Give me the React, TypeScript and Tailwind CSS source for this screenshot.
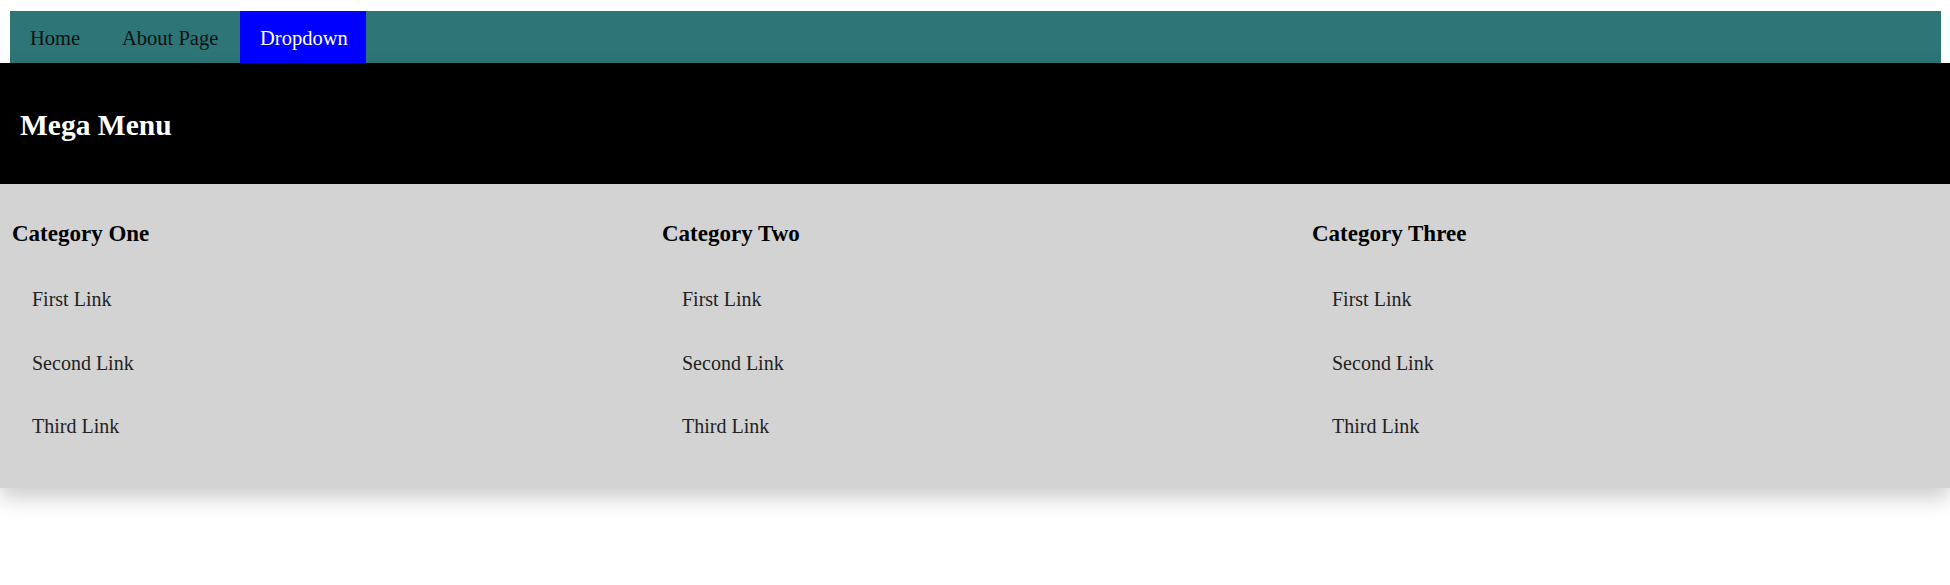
import React from 'react';

const categories = [
  { title: 'Category One', links: ['First Link', 'Second Link', 'Third Link'] },
  { title: 'Category Two', links: ['First Link', 'Second Link', 'Third Link'] },
  { title: 'Category Three', links: ['First Link', 'Second Link', 'Third Link'] },
];

const navItems = [
  { label: 'Home', active: false, width: 'w-[92px]' },
  { label: 'About Page', active: false, width: 'w-[138px]' },
  { label: 'Dropdown', active: true, width: 'w-[126px]' },
];

export default function App() {
  return (
    <div className="w-full h-[585px] bg-white font-['Liberation_Serif',serif] overflow-hidden">
      <div className="pt-[11px]">
        {/* top bar */}
        <nav className="ml-[10px] mr-[9px] h-[52px] bg-[#2d7577] flex">
          {navItems.map((item) => (
            <a
              key={item.label}
              href="#"
              className={`flex items-center ${item.width} pl-[20px] pt-[3px] text-[20.5px] leading-[23px] whitespace-nowrap ${
                item.active ? 'bg-[#0000ff] text-white' : 'text-[#111]'
              }`}
            >
              {item.label}
            </a>
          ))}
        </nav>

        {/* mega menu panel */}
        <div className="w-full shadow-[0_10px_20px_rgba(0,0,0,0.2)]">
          <div className="h-[121px] bg-black flex items-center px-[20px] pt-[2px]">
            <h2 className="text-white font-bold text-[29.5px] leading-[34px]">Mega Menu</h2>
          </div>
          <div className="h-[304px] bg-[#d3d3d3] grid grid-cols-3">
            {categories.map((cat) => (
              <div key={cat.title} className="pt-[37px] px-[12px]">
                <h3 className="font-bold text-[23px] leading-[26px] text-black mb-[21px]">{cat.title}</h3>
                {cat.links.map((link) => (
                  <a key={link} href="#" className="block px-[20px] py-[20px] text-[20px] leading-[23.5px] text-[#222]">
                    {link}
                  </a>
                ))}
              </div>
            ))}
          </div>
        </div>
      </div>
    </div>
  );
}
